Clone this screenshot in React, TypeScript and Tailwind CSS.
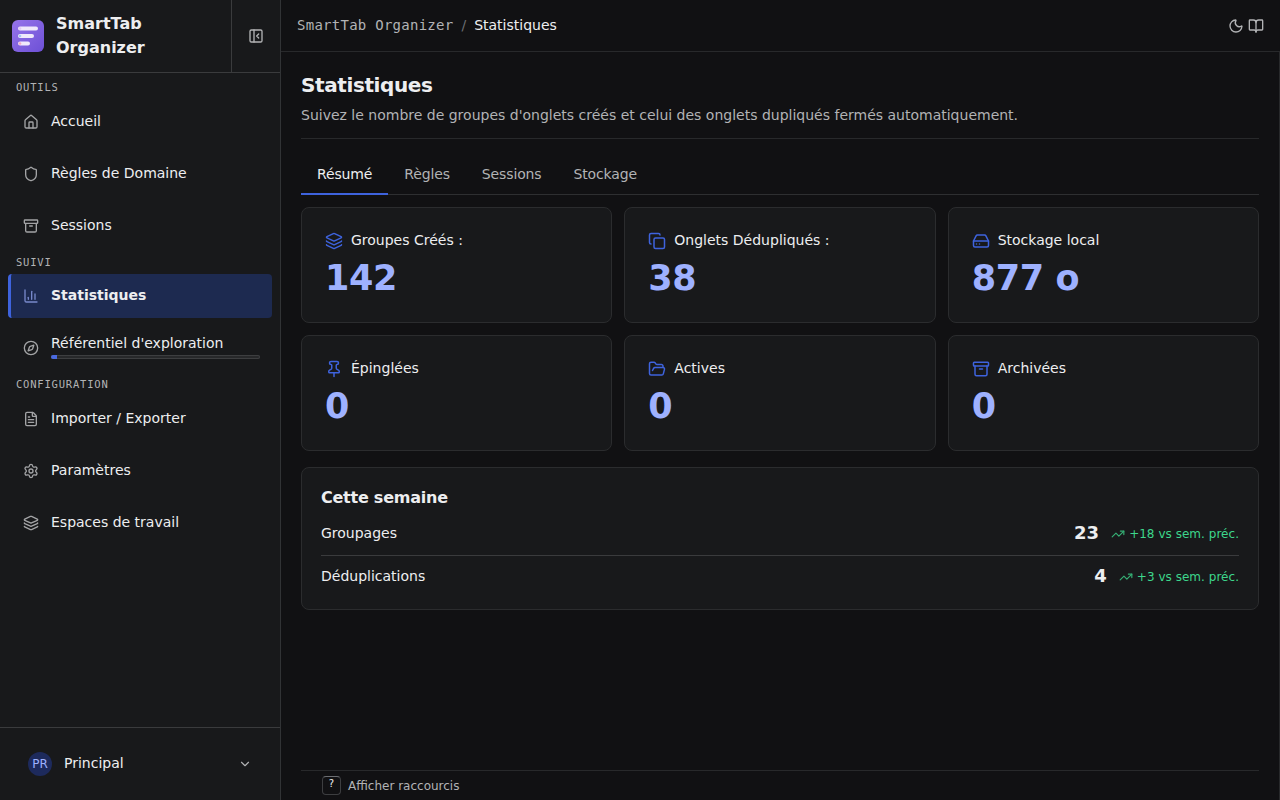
import type { ReactNode } from 'react';
import {
  Archive,
  BookOpen,
  ChartColumn,
  ChevronDown,
  Compass,
  Copy,
  FileText,
  FolderOpen,
  HardDrive,
  House,
  Layers,
  Moon,
  PanelLeftClose,
  Pin,
  Settings,
  Shield,
  TrendingUp,
  type LucideIcon,
} from 'lucide-react';

function Logo() {
  return (
    <svg width="32" height="32" viewBox="0 0 32 32" className="shrink-0">
      <defs>
        <linearGradient id="logo-bg" x1="0" y1="0" x2="1" y2="1">
          <stop offset="0" stopColor="#9674ea" />
          <stop offset="1" stopColor="#6d50d6" />
        </linearGradient>
      </defs>
      <rect width="32" height="32" rx="6" fill="url(#logo-bg)" />
      <rect x="6" y="6.5" width="20" height="4" rx="2" fill="#efe8fb" />
      <rect x="6" y="14" width="16" height="4" rx="2" fill="#efe8fb" />
      <rect x="6" y="21.5" width="12" height="4" rx="2" fill="#efe8fb" />
      <circle cx="8" cy="8.5" r="1.3" fill="#e3c9f5" />
      <circle cx="8" cy="16" r="1.3" fill="#a5c8f5" />
      <circle cx="8" cy="23.5" r="1.3" fill="#f3a9c4" />
    </svg>
  );
}

function SectionLabel({ children }: { children: ReactNode }) {
  return (
    <div className="h-[26px] px-4 pt-[7px] font-['DejaVu_Sans_Mono',monospace] text-[10.5px] leading-[14px] tracking-[0.8px] text-[#b2b3b5] uppercase">
      {children}
    </div>
  );
}

type NavItemProps = { icon: LucideIcon; label: string; active?: boolean; progress?: number };

function NavItem({ icon: Icon, label, active, progress }: NavItemProps) {
  return (
    <a
      className={
        active
          ? 'mx-2 flex h-11 items-center gap-3 rounded border-l-[3px] border-[#3e63dd] bg-[#1d2a50] pl-3 pr-3 text-[#edeef0]'
          : 'mx-2 flex h-11 items-center gap-3 rounded pl-[15px] pr-3 text-[#edeef0]'
      }
    >
      <Icon size={16} className={active ? 'shrink-0 text-[#9eb1ff] opacity-70' : 'shrink-0 text-[#a3a4a6]'} />
      <div className={progress ? 'flex-1 pb-1' : 'flex-1 pb-0.5'}>
        <div className={active ? 'text-sm leading-5 font-bold' : 'text-sm leading-5'}>{label}</div>
        {progress !== undefined && (
          <div className="mt-0.5 h-1 overflow-hidden rounded-full bg-[#27282a] ring-1 ring-inset ring-[#3d3e40]">
            <div className="h-full bg-[#4a6ae0]" style={{ width: `${progress}%` }} />
          </div>
        )}
      </div>
    </a>
  );
}

function Sidebar() {
  return (
    <aside className="flex h-full w-[281px] shrink-0 flex-col border-r border-[#313335] bg-[#18191b]">
      <div className="flex h-[73px] shrink-0 border-b border-[#3a3b3d]">
        <div className="flex flex-1 items-center gap-3 pl-3">
          <Logo />
          <div className="w-28 text-base leading-6 font-bold">SmartTab Organizer</div>
        </div>
        <div className="flex w-[49px] items-center justify-center border-l border-[#3a3b3d] text-[#b2b3b5]">
          <PanelLeftClose size={16} />
        </div>
      </div>
      <nav className="flex flex-1 flex-col">
        <SectionLabel>Outils</SectionLabel>
        <div className="mt-px flex flex-col gap-2">
          <NavItem icon={House} label="Accueil" />
          <NavItem icon={Shield} label="Règles de Domaine" />
          <NavItem icon={Archive} label="Sessions" />
        </div>
        <SectionLabel>Suivi</SectionLabel>
        <div className="flex flex-col gap-2">
          <NavItem icon={ChartColumn} label="Statistiques" active />
          <NavItem icon={Compass} label="Référentiel d'exploration" progress={3} />
        </div>
        <SectionLabel>Configuration</SectionLabel>
        <div className="mt-px flex flex-col gap-2">
          <NavItem icon={FileText} label="Importer / Exporter" />
          <NavItem icon={Settings} label="Paramètres" />
          <NavItem icon={Layers} label="Espaces de travail" />
        </div>
      </nav>
      <div className="flex h-[73px] shrink-0 items-center border-t border-[#3a3b3d] pr-7 pl-7">
        <div className="flex size-6 items-center justify-center rounded-full bg-[#1d2a5c] text-xs text-[#9eb1ff]">PR</div>
        <span className="ml-3 flex-1 pb-0.5 text-sm">Principal</span>
        <ChevronDown size={14} className="text-[#b2b3b5]" />
      </div>
    </aside>
  );
}

function TopBar() {
  return (
    <header className="flex h-[52px] shrink-0 items-center border-b border-[#28292b] px-4 text-sm">
      <div className="flex pb-0.5">
        <span className="font-['DejaVu_Sans_Mono',monospace] tracking-[0.26px] text-[#b2b3b5]">SmartTab Organizer</span>
        <span className="mx-2 text-[#6c6e72]">/</span>
        <span>Statistiques</span>
      </div>
      <div className="ml-auto flex gap-1 text-[#b2b3b5]">
        <Moon size={16} />
        <BookOpen size={16} />
      </div>
    </header>
  );
}

const tabs = ['Résumé', 'Règles', 'Sessions', 'Stockage'];

function Tabs() {
  return (
    <div className="mt-[15px] flex h-[41px] border-b border-[#2e2f31] text-sm tracking-[-0.14px]">
      {tabs.map((tab, i) => (
        <div
          key={tab}
          className={
            i === 0
              ? '-mb-px flex items-center border-b-2 border-[#3e63dd] px-4'
              : 'flex items-center px-4 text-[#b2b3b5]'
          }
        >
          {tab}
        </div>
      ))}
    </div>
  );
}

const stats: { icon: LucideIcon; label: string; value: string }[] = [
  { icon: Layers, label: 'Groupes Créés :', value: '142' },
  { icon: Copy, label: 'Onglets Dédupliqués :', value: '38' },
  { icon: HardDrive, label: 'Stockage local', value: '877 o' },
  { icon: Pin, label: 'Épinglées', value: '0' },
  { icon: FolderOpen, label: 'Actives', value: '0' },
  { icon: Archive, label: 'Archivées', value: '0' },
];

function StatCard({ icon: Icon, label, value }: (typeof stats)[number]) {
  return (
    <div className="h-[116px] rounded-lg border border-[#2b2c2e] bg-[#18191b] px-[23px] pt-[22px]">
      <div className="flex items-center gap-2">
        <Icon size={18} className="mt-0.5 text-[#3e63dd]" />
        <span className="text-sm leading-5">{label}</span>
      </div>
      <div className="mt-2 text-[35px] leading-10 font-bold tracking-[-0.35px] text-[#9eb1ff]">{value}</div>
    </div>
  );
}

function WeekRow({ label, value, delta }: { label: string; value: number; delta: string }) {
  return (
    <div className="flex h-[42px] items-center pb-0.5">
      <span className="text-sm">{label}</span>
      <span className="ml-auto text-lg font-bold">{value}</span>
      <span className="ml-3 flex items-center gap-1 pt-px text-xs tracking-[0.03px] text-[#3dd68c]">
        <TrendingUp size={14} className="opacity-80" />
        {delta} vs sem. préc.
      </span>
    </div>
  );
}

export default function App() {
  return (
    <div className="flex h-screen overflow-hidden bg-[#111113] font-['DejaVu_Sans',sans-serif] text-[#edeef0]">
      <Sidebar />
      <div className="flex min-w-0 flex-1 flex-col">
        <TopBar />
        <main className="flex flex-1 flex-col border-r border-[#28292b] px-5">
          <div className="h-[87px] border-b border-[#28292b] pt-5">
            <h1 className="text-xl leading-[26px] font-bold tracking-[-0.4px]">Statistiques</h1>
            <p className="mt-[7px] text-sm leading-5 text-[#b2b3b5]">
              Suivez le nombre de groupes d'onglets créés et celui des onglets dupliqués fermés automatiquement.
            </p>
          </div>
          <Tabs />
          <div className="mt-3 grid grid-cols-3 gap-3">
            {stats.map((stat) => (
              <StatCard key={stat.label} {...stat} />
            ))}
          </div>
          <section className="mt-4 h-[143px] rounded-lg border border-[#2b2c2e] bg-[#18191b] px-[19px] pt-[18px]">
            <h2 className="text-base leading-6 font-bold tracking-[-0.24px]">Cette semaine</h2>
            <div className="mt-[3px]">
              <WeekRow label="Groupages" value={23} delta="+18" />
              <div className="h-px bg-[#3a3b3d]" />
              <WeekRow label="Déduplications" value={4} delta="+3" />
            </div>
          </section>
          <footer className="mt-auto flex h-[30px] items-center gap-[7px] border-t border-[#28292b] pl-[21px] text-xs text-[#b2b3b5]">
            <kbd className="flex h-[19px] w-[19px] justify-center rounded border border-[#3d3e40] border-t-[#6c6e72] font-['DejaVu_Sans',sans-serif] text-[10px] leading-[14px] text-[#edeef0]">
              ?
            </kbd>
            Afficher raccourcis
          </footer>
        </main>
      </div>
    </div>
  );
}
